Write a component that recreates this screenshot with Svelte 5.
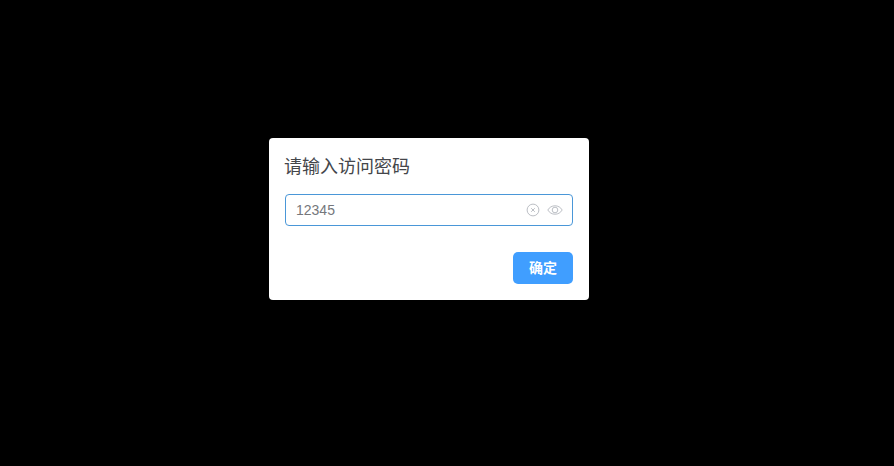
<script>
  let password = $state('12345')
</script>

<div class="overlay">
  <div class="box">
    <div class="title">请输入访问密码</div>
    <div class="field">
      <input class="input" type="text" bind:value={password} />
      <span class="suffix">
        <svg class="icon" viewBox="0 0 14 14" width="14" height="14" fill="none" stroke="#bcbfc5" stroke-width="1">
          <circle cx="7" cy="7" r="5.900" />
          <path d="M5.200 5.200l3.600 3.600M8.800 5.200l-3.600 3.600" />
        </svg>
        <svg class="icon" viewBox="0 0 16 14" width="16" height="14" fill="none" stroke="#bcbfc5" stroke-width="1">
          <path d="M.8 7c1.700-2.800 4.100-4.200 7.200-4.200s5.500 1.400 7.200 4.200c-1.700 2.800-4.100 4.200-7.200 4.200S2.500 9.800.8 7z" />
          <circle cx="8" cy="7" r="2.800" />
        </svg>
      </span>
    </div>
    <div class="actions">
      <button class="confirm" type="button">确定</button>
    </div>
  </div>
</div>

<style>
  :global(body) {
    background: #000;
  }
  .overlay {
    display: flex;
    align-items: center;
    justify-content: center;
    box-sizing: border-box;
    height: 466px;
    padding: 0 36px 28px 0;
    background: #000;
    font-family: "Liberation Sans", "Noto Sans CJK SC", sans-serif;
  }
  .box {
    box-sizing: border-box;
    width: 320px;
    height: 162px;
    padding: 16px;
    background: #fff;
    border-radius: 4px;
  }
  .title {
    height: 26px;
    margin-left: -1px;
    font-size: 18px;
    line-height: 26px;
    color: #44464a;
  }
  .field {
    position: relative;
    margin-top: 14px;
  }
  .input {
    display: block;
    box-sizing: border-box;
    width: 100%;
    height: 32px;
    padding: 0 50px 0 10px;
    border: 1px solid #4a97d8;
    border-radius: 4px;
    outline: none;
    font: 14px "Liberation Sans", sans-serif;
    color: #75777c;
  }
  .suffix {
    position: absolute;
    top: 0;
    right: 10px;
    height: 32px;
    display: flex;
    align-items: center;
    gap: 7px;
  }
  .icon {
    display: block;
  }
  .actions {
    display: flex;
    justify-content: flex-end;
    margin-top: 26px;
  }
  .confirm {
    width: 60px;
    height: 32px;
    padding: 0 0 2px;
    border: none;
    border-radius: 5px;
    background: #409eff;
    color: #fff;
    font-family: "Liberation Sans", "Noto Sans CJK SC", sans-serif;
    font-size: 14px;
    font-weight: 700;
  }
</style>
